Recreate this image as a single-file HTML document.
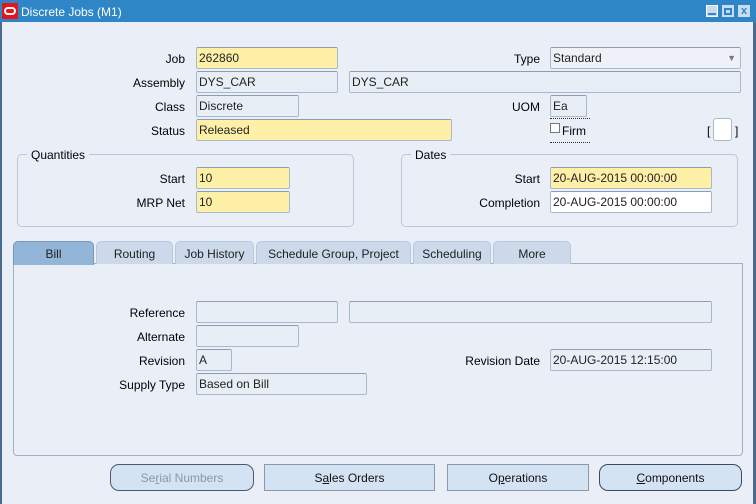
<!DOCTYPE html>
<html><head><meta charset="utf-8"><style>
*{margin:0;padding:0;box-sizing:border-box}
body{width:756px;height:504px;background:#eaeff7;font-family:"Liberation Sans",sans-serif;font-size:12px;color:#000;position:relative;overflow:hidden}
.a{position:absolute}
.l{position:absolute;text-align:right;width:180px;line-height:24px}
.f{position:absolute;height:22px;border:1px solid #a9b9cc;border-top-color:#8e9db0;background:#e8eef6;line-height:21px;padding-left:2px;color:#222;border-radius:2px}
.y{background:#fff0a8}
.w{background:#fff}
.tab{position:absolute;top:241px;height:23px;background:#cbd9ea;border:1px solid #b8c8dc;border-bottom:none;border-radius:5px 5px 0 0;text-align:center;line-height:24px;color:#222}
.box{position:absolute;border:1px solid #b8c8dc;border-radius:5px}
.lg{position:absolute;background:#eaeff7;padding:0 4px;line-height:14px}
.btn{position:absolute;top:464px;height:27px;background:#d4e3f3;border:1px solid #8a98a8;text-align:center;line-height:27px;color:#111}
</style></head><body>
<div class="a" style="left:0;top:0;width:756px;height:22px;background:#2e86c6"></div>
<div class="a" style="left:2px;top:3px;width:16px;height:16px;background:#e8141c"></div>
<div class="a" style="left:4px;top:7px;width:12px;height:8px;border:2px solid #fff;border-radius:5px"></div>
<div class="a" style="left:21px;top:4px;color:#fff;line-height:16px">Discrete Jobs (M1)</div>
<div class="a" style="left:706px;top:5px;width:12px;height:12px;background:#c8dcef;border:1px solid #fff"></div>
<div class="a" style="left:708px;top:13px;width:8px;height:2px;background:#2e86c6"></div>
<div class="a" style="left:722px;top:5px;width:12px;height:12px;background:#c8dcef"></div>
<div class="a" style="left:724px;top:8px;width:8px;height:7px;border:2px solid #2e86c6"></div>
<div class="a" style="left:738px;top:5px;width:12px;height:12px;background:#c8dcef;color:#2e86c6;font-weight:bold;font-size:11px;line-height:12px;text-align:center">x</div>
<div class="a" style="left:0;top:22px;width:2px;height:482px;background:#4a6a90"></div>
<div class="a" style="left:753px;top:22px;width:3px;height:482px;background:#4a6a90"></div>

<div class="l" style="left:5px;top:47px">Job</div><div class="f y" style="left:196px;top:47px;width:142px">262860</div>
<div class="l" style="left:360px;top:47px">Type</div><div class="f" style="left:550px;top:47px;width:191px;background:#eef2f8">Standard<span class="a" style="right:4px;top:0;color:#777;font-size:9px">▼</span></div>
<div class="l" style="left:5px;top:71px">Assembly</div><div class="f" style="left:196px;top:71px;width:142px">DYS_CAR</div><div class="f" style="left:349px;top:71px;width:392px">DYS_CAR</div>
<div class="l" style="left:5px;top:95px">Class</div><div class="f" style="left:196px;top:95px;width:103px">Discrete</div>
<div class="l" style="left:360px;top:95px">UOM</div><div class="f" style="left:550px;top:95px;width:37px">Ea</div>
<div class="l" style="left:5px;top:119px">Status</div><div class="f y" style="left:196px;top:119px;width:256px">Released</div>
<div class="a" style="left:550px;top:118px;width:40px;border-top:1px dotted #333"></div>
<div class="a" style="left:550px;top:142px;width:40px;border-top:1px dotted #333"></div>
<div class="a" style="left:550px;top:123px;width:10px;height:10px;border:1px solid #777;background:#fff"></div>
<div class="a" style="left:562px;top:124px;line-height:14px">Firm</div>
<div class="a" style="left:707px;top:123px;line-height:16px">[</div>
<div class="a" style="left:713px;top:118px;width:19px;height:23px;background:#fff;border:1px solid #a9b9cc;border-radius:3px"></div>
<div class="a" style="left:735px;top:123px;line-height:16px">]</div>

<div class="box" style="left:17px;top:154px;width:337px;height:73px"></div><div class="lg" style="left:27px;top:148px">Quantities</div>
<div class="l" style="left:5px;top:167px">Start</div><div class="f y" style="left:196px;top:167px;width:94px">10</div>
<div class="l" style="left:5px;top:191px">MRP Net</div><div class="f y" style="left:196px;top:191px;width:94px">10</div>
<div class="box" style="left:401px;top:154px;width:337px;height:73px"></div><div class="lg" style="left:411px;top:148px">Dates</div>
<div class="l" style="left:360px;top:167px">Start</div><div class="f y" style="left:550px;top:167px;width:162px">20-AUG-2015 00:00:00</div>
<div class="l" style="left:360px;top:191px">Completion</div><div class="f w" style="left:550px;top:191px;width:162px">20-AUG-2015 00:00:00</div>

<div class="a" style="left:13px;top:263px;width:730px;height:193px;border:1px solid #a0b0c4;border-radius:0 0 4px 4px"></div>
<div class="tab" style="left:13px;width:81px;background:#92b5d8;border-color:#7896b8;height:24px">Bill</div>
<div class="tab" style="left:96px;width:77px">Routing</div>
<div class="tab" style="left:175px;width:79px">Job History</div>
<div class="tab" style="left:256px;width:155px">Schedule Group, Project</div>
<div class="tab" style="left:413px;width:78px">Scheduling</div>
<div class="tab" style="left:493px;width:78px">More</div>

<div class="l" style="left:5px;top:301px">Reference</div><div class="f" style="left:196px;top:301px;width:142px"></div><div class="f" style="left:349px;top:301px;width:363px"></div>
<div class="l" style="left:5px;top:325px">Alternate</div><div class="f" style="left:196px;top:325px;width:103px"></div>
<div class="l" style="left:5px;top:349px">Revision</div><div class="f" style="left:196px;top:349px;width:36px">A</div>
<div class="l" style="left:360px;top:349px">Revision Date</div><div class="f" style="left:550px;top:349px;width:162px">20-AUG-2015 12:15:00</div>
<div class="l" style="left:5px;top:373px">Supply Type</div><div class="f" style="left:196px;top:373px;width:171px">Based on Bill</div>

<div class="btn" style="left:110px;width:144px;border-radius:9px;border-color:#4a5a70;color:#8a96a4">Se<u>r</u>ial Numbers</div>
<div class="btn" style="left:264px;width:171px">S<u>a</u>les Orders</div>
<div class="btn" style="left:447px;width:142px">O<u>p</u>erations</div>
<div class="btn" style="left:599px;width:143px;border-radius:9px;border-color:#3a4a60"><u>C</u>omponents</div>
</body></html>
